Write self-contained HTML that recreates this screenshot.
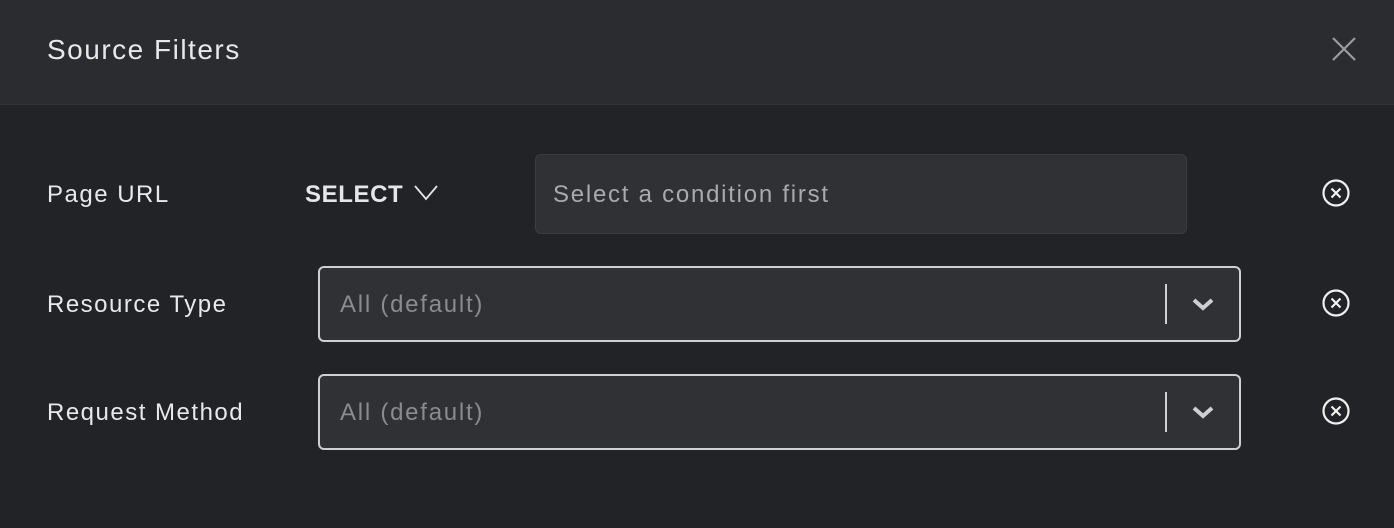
<!DOCTYPE html>
<html><head><meta charset="utf-8"><style>
*{box-sizing:border-box;margin:0;padding:0}
body{width:1394px;height:528px;background:#222327;font-family:"Liberation Sans",sans-serif;color:#e6e6e6;position:relative;overflow:hidden}
.hdr{position:absolute;left:0;top:0;width:1394px;height:105px;background:#2b2c30;border-bottom:1px solid #323337}
.title{position:absolute;left:47px;top:34px;font-size:28px;letter-spacing:1.5px;color:#e8e8e8}
.lbl{position:absolute;left:47px;font-size:24px;letter-spacing:1.5px;color:#e8e8e8}
.box{position:absolute;background:#303135;border-radius:6px}
.ph{position:absolute;font-size:24px;letter-spacing:1.75px;color:#8a8b8e}
svg{position:absolute}
</style></head><body>
<div class="hdr"><div class="title">Source Filters</div>
<svg style="left:1331px;top:36px" width="26" height="26" viewBox="0 0 26 26"><path d="M2 2L24 24M24 2L2 24" stroke="#9a9b9e" stroke-width="2.2" fill="none"/></svg>
</div>

<div class="lbl" style="top:181px">Page URL</div>
<div style="position:absolute;left:305px;top:181px;font-size:24px;font-weight:bold;letter-spacing:0.6px;color:#e6e6e6">SELECT</div>
<svg style="left:413px;top:183px" width="26" height="20" viewBox="0 0 26 20"><path d="M2 3L13 16L24 3" stroke="#e6e6e6" stroke-width="1.8" fill="none"/></svg>
<div class="box" style="left:535px;top:154px;width:652px;height:80px;border:1.5px solid #3c3d41"></div>
<div class="ph" style="left:553px;top:181px;color:#a9aaad">Select a condition first</div>

<div class="lbl" style="top:291px">Resource Type</div>
<div class="box" style="left:318px;top:266px;width:923px;height:76px;border:2px solid #cfcfd1"></div>
<div class="ph" style="left:340px;top:291px">All (default)</div>
<div style="position:absolute;left:1165px;top:284px;width:2px;height:40px;background:#cfcfd1"></div>
<svg style="left:1191px;top:297px" width="24" height="16" viewBox="0 0 24 16"><path d="M3 3L12 11L21 3" stroke="#cfcfd1" stroke-width="4" fill="none"/></svg>

<div class="lbl" style="top:399px">Request Method</div>
<div class="box" style="left:318px;top:374px;width:923px;height:76px;border:2px solid #cfcfd1"></div>
<div class="ph" style="left:340px;top:399px">All (default)</div>
<div style="position:absolute;left:1165px;top:392px;width:2px;height:40px;background:#cfcfd1"></div>
<svg style="left:1191px;top:405px" width="24" height="16" viewBox="0 0 24 16"><path d="M3 3L12 11L21 3" stroke="#cfcfd1" stroke-width="4" fill="none"/></svg>

<svg style="left:1321px;top:178px" width="30" height="30" viewBox="0 0 30 30"><circle cx="15" cy="15" r="12.5" stroke="#f0f0f0" stroke-width="2.2" fill="none"/><path d="M10.5 10.5L19.5 19.5M19.5 10.5L10.5 19.5" stroke="#f0f0f0" stroke-width="2.2"/></svg>
<svg style="left:1321px;top:288px" width="30" height="30" viewBox="0 0 30 30"><circle cx="15" cy="15" r="12.5" stroke="#f0f0f0" stroke-width="2.2" fill="none"/><path d="M10.5 10.5L19.5 19.5M19.5 10.5L10.5 19.5" stroke="#f0f0f0" stroke-width="2.2"/></svg>
<svg style="left:1321px;top:396px" width="30" height="30" viewBox="0 0 30 30"><circle cx="15" cy="15" r="12.5" stroke="#f0f0f0" stroke-width="2.2" fill="none"/><path d="M10.5 10.5L19.5 19.5M19.5 10.5L10.5 19.5" stroke="#f0f0f0" stroke-width="2.2"/></svg>
</body></html>
